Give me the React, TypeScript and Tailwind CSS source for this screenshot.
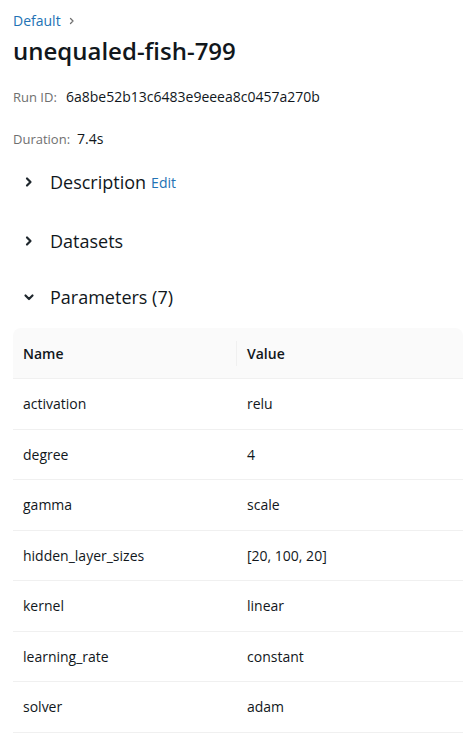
import React from 'react';

const params: [string, string][] = [
  ['activation', 'relu'],
  ['degree', '4'],
  ['gamma', 'scale'],
  ['hidden_layer_sizes', '[20, 100, 20]'],
  ['kernel', 'linear'],
  ['learning_rate', 'constant'],
  ['solver', 'adam'],
];

const ChevronRight = () => (
  <svg width="16" height="16" viewBox="0 0 16 16" fill="none">
    <path d="M6 4.5 9.5 8 6 11.5" stroke="#1f272d" strokeWidth="2.2" strokeLinecap="round" strokeLinejoin="round" />
  </svg>
);

const ChevronDown = () => (
  <svg width="16" height="16" viewBox="0 0 16 16" fill="none">
    <path d="M4.5 6.5 8 10l3.5-3.5" stroke="#1f272d" strokeWidth="2.2" strokeLinecap="round" strokeLinejoin="round" />
  </svg>
);

const Section = ({ open, title, extra, className }: { open?: boolean; title: string; extra?: React.ReactNode; className: string }) => (
  <div className={`flex items-center h-7 ${className}`}>
    <div className="w-[37px] pl-[8px] flex items-center">{open ? <ChevronDown /> : <ChevronRight />}</div>
    <span className="text-[18px] leading-7 text-[#11171c]">{title}</span>
    {extra}
  </div>
);

export default function App() {
  return (
    <div className="min-h-screen bg-white px-[13px] pt-[11px] text-[#11171c]" style={{ fontFamily: '"Segoe UI", "Open Sans", sans-serif' }}>
      <div className="flex items-center h-5 text-[14px] leading-5">
        <span className="text-[#2272b4]">Default</span>
        <svg className="ml-[6px]" width="10" height="10" viewBox="0 0 10 10" fill="none">
          <path d="M3.5 2.5 6 5 3.5 7.5" stroke="#6f6f6f" strokeWidth="1.3" strokeLinecap="round" strokeLinejoin="round" />
        </svg>
      </div>
      <h1 className="mt-[4px] h-8 text-[24px] leading-8 font-semibold">unequaled-fish-799</h1>

      <div className="mt-[20px] h-5 flex items-center leading-5">
        <span className="text-[#6f6f6f] text-[13px] w-[53px]">Run ID:</span>
        <span className="text-[14px]">6a8be52b13c6483e9eeea8c0457a270b</span>
      </div>
      <div className="mt-[22px] h-5 flex items-center leading-5">
        <span className="text-[#6f6f6f] text-[13px] w-[64px]">Duration:</span>
        <span className="text-[14px]">7.4s</span>
      </div>

      <Section
        className="mt-[19px]"
        title="Description"
        extra={<span className="ml-[5px] text-[14px] text-[#2272b4]">Edit</span>}
      />
      <Section className="mt-[31px]" title="Datasets" />
      <Section className="mt-[28px]" open title="Parameters (7)" />

      <div className="mt-[17px] w-[450px] text-[14px]">
        <div className="flex h-[51px] items-center bg-[#fafafa] rounded-t-[8px] border-b border-[#f0f0f0]">
          <div className="w-[224px] px-[10px] font-semibold border-r border-[#f0f0f0] h-[25px] flex items-center">Name</div>
          <div className="px-[10px] font-semibold">Value</div>
        </div>
        {params.map(([k, v]) => (
          <div key={k} className="flex h-[50.5px] items-center border-b border-[#f0f0f0]">
            <div className="w-[224px] px-[10px]">{k}</div>
            <div className="px-[10px]">{v}</div>
          </div>
        ))}
      </div>
    </div>
  );
}
